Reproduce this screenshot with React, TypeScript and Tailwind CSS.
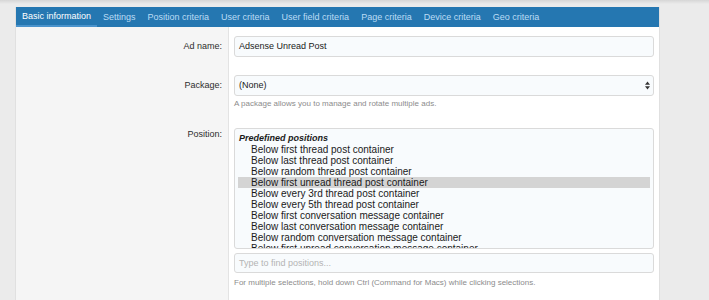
/**
 * Ad editor form
 *
 * Tabbed form for editing an advertisement placement
 */

const tabs = [
  'Basic information',
  'Settings',
  'Position criteria',
  'User criteria',
  'User field criteria',
  'Page criteria',
  'Device criteria',
  'Geo criteria',
];

const positions = [
  'Below first thread post container',
  'Below last thread post container',
  'Below random thread post container',
  'Below first unread thread post container',
  'Below every 3rd thread post container',
  'Below every 5th thread post container',
  'Below first conversation message container',
  'Below last conversation message container',
  'Below random conversation message container',
  'Below first unread conversation message container',
];

const selected = 3;

function Label({ text, className }: { text: string; className: string }) {
  return (
    <div className={`w-[213px] shrink-0 bg-[#f5f5f5] border-r border-[#e3e3e3] pr-[6px] text-right text-[#2d2d2d] ${className}`}>
      {text}
    </div>
  );
}

export default function App() {
  return (
    <div className="min-h-[300px] bg-[#ebebeb] font-['Liberation_Sans',Arial,sans-serif] text-[9px]">
      <div className="h-[4px] bg-gradient-to-b from-[#d6d6d6] to-[#ebebeb]" />

      <div className="mt-[3px] ml-[15px] w-[645px] border-x border-[#e0e0e0] bg-white">
        {/* Tabs */}
        <div className="flex h-[20px] bg-[#2577b1]">
          {tabs.map((t, i) => (
            <div
              key={t}
              className={`flex items-center px-[6px] leading-none ${
                i === 0 ? 'text-white border-b-2 border-[#4a93cc]' : 'text-[#bcdcf5]'
              }`}
            >
              {t}
            </div>
          ))}
        </div>

        {/* Ad name */}
        <div className="flex">
          <Label text="Ad name:" className="pt-[9px] leading-[21px]" />
          <div className="flex-1 px-[5px] py-[9px]">
            <div className="h-[21px] rounded-[3px] border border-[#dadada] bg-[#f8fbfd] px-[4px] leading-[19px] text-[#1a1a1a]">
              Adsense Unread Post
            </div>
          </div>
        </div>

        {/* Package */}
        <div className="flex">
          <Label text="Package:" className="pt-[9px] leading-[21px]" />
          <div className="flex-1 px-[5px] py-[9px]">
            <div className="flex h-[21px] items-center justify-between rounded-[3px] border border-[#dadada] bg-[#f8fbfd] pl-[4px] pr-[3px] text-[#1a1a1a]">
              <span>(None)</span>
              <svg width="5" height="9" viewBox="0 0 5 9">
                <path d="M2.5 0.5 L5 3.8 L0 3.8 Z" fill="#333" />
                <path d="M2.5 8.5 L5 5.2 L0 5.2 Z" fill="#333" />
              </svg>
            </div>
            <div className="mt-[3px] text-[8px] leading-[10px] text-[#8c8c8c]">
              A package allows you to manage and rotate multiple ads.
            </div>
          </div>
        </div>

        {/* Position */}
        <div className="flex">
          <Label text="Position:" className="pt-[10px] leading-[12px]" />
          <div className="flex-1 px-[5px] pt-[10px] pb-[20px]">
            <div className="h-[121px] overflow-hidden rounded-[3px] border border-[#dadada] bg-[#f8fbfd] px-[3px] pt-[4px] text-[#1a1a1a]">
              <div className="pl-[1px] font-bold italic leading-[11px]">Predefined positions</div>
              {positions.map((p, i) => (
                <div
                  key={p}
                  className={`whitespace-nowrap pl-[13px] text-[10px] leading-[11px] ${i === selected ? 'bg-[#d4d4d4]' : ''}`}
                >
                  {p}
                </div>
              ))}
            </div>
            <div className="mt-[4px] h-[20px] rounded-[3px] border border-[#dadada] bg-[#f8fbfd] px-[4px] leading-[18px] text-[#b4b4b4]">
              Type to find positions...
            </div>
            <div className="mt-[5px] text-[8px] leading-[10px] text-[#8c8c8c]">
              For multiple selections, hold down Ctrl (Command for Macs) while clicking selections.
            </div>
          </div>
        </div>
      </div>
    </div>
  );
}
